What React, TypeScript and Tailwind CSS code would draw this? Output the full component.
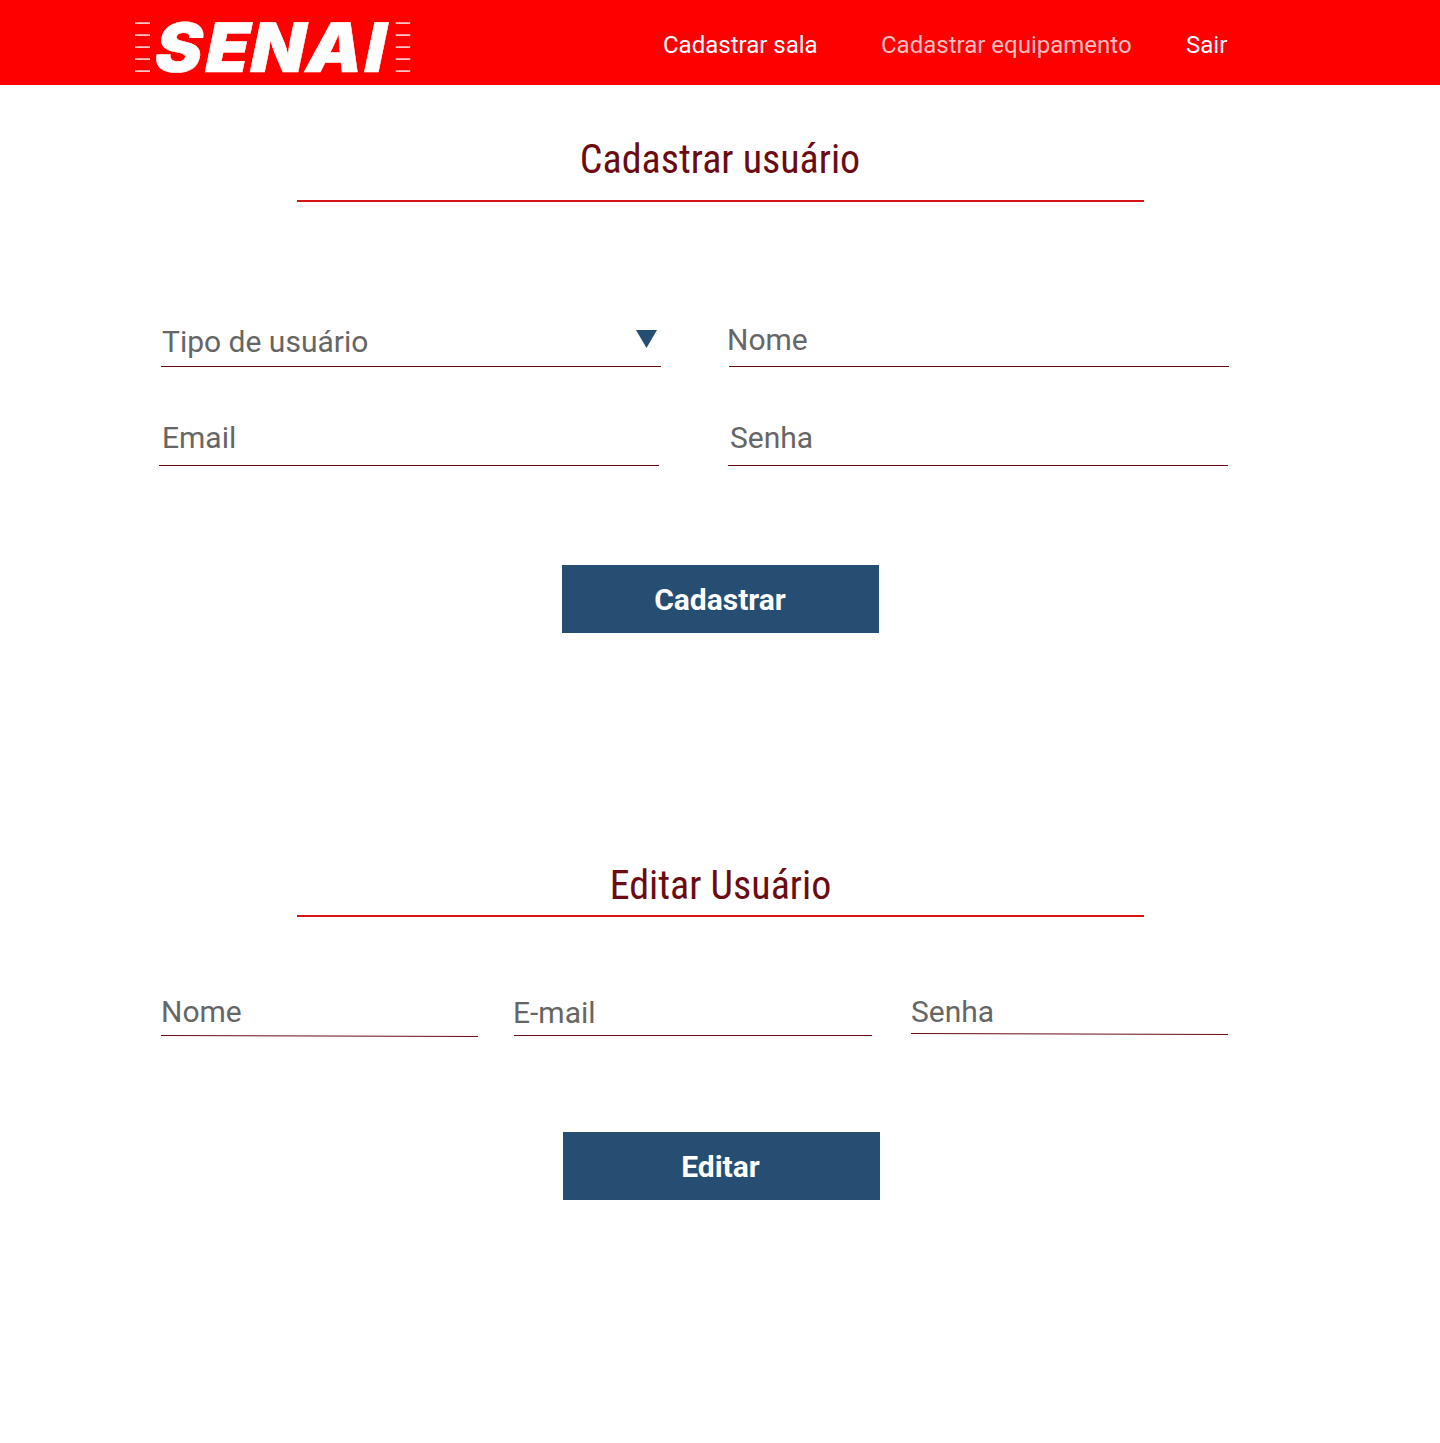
import type { ReactNode } from "react";

const TICKS = [22.3, 34.3, 46.3, 58.3, 70.3];

function Logo() {
  return (
    <svg width="286" height="85" viewBox="129 0 286 85" className="ml-[129px] shrink-0 overflow-visible" role="img" aria-label="SENAI">
      {TICKS.map((y) => (
        <g key={y} fill="#fff" fillOpacity="0.85">
          <rect x="135" y={y} width="15" height="1.6" />
          <rect x="395.7" y={y} width="14.5" height="1.6" />
        </g>
      ))}
      <text
        x="148.5 197.2 240.4 294 350.2"
        y="0"
        transform="translate(0 71.7) skewX(-2) scale(1.04 1)"
        fill="#fff"
        stroke="#fff"
        strokeWidth="0.5"
        className="font-['Inter',sans-serif] text-[68.3px] font-black italic"
      >
        SENAI
      </text>
    </svg>
  );
}

function Title({ children, className }: { children: ReactNode; className: string }) {
  return (
    <h2
      className={`ml-[297px] w-[847px] border-b-2 border-[#d61414] text-center font-['Roboto_Condensed','Roboto',sans-serif] text-[40px] leading-[48px] text-[#6b0c12] [font-stretch:75%] ${className}`}
    >
      {children}
    </h2>
  );
}

function Field({ label, className, children }: { label: string; className: string; children?: ReactNode }) {
  return (
    <div className={`flex shrink-0 items-start justify-between border-[#6b0c12] leading-9 ${className}`}>
      <span>{label}</span>
      {children}
    </div>
  );
}

function SlopedField({ label, className, gap }: { label: string; className: string; gap: string }) {
  return (
    <div className={`w-[317px] shrink-0 leading-9 ${className}`}>
      <div className={gap}>{label}</div>
      <svg width="317" height="3" className="block">
        <line x1="0" y1="0.5" x2="317" y2="1.5" stroke="#6b0c12" />
      </svg>
    </div>
  );
}

export default function App() {
  return (
    <div className="h-[1443px] w-[1440px] bg-white font-['Roboto',sans-serif]">
      <header className="flex h-[85px] items-start bg-[#ff0000] text-2xl text-white">
        <Logo />
        <nav className="mt-[29px] ml-[248px] flex whitespace-nowrap">
          <a className="w-[218px]">Cadastrar sala</a>
          <a className="w-[305px] text-white/75">Cadastrar equipamento</a>
          <a>Sair</a>
        </nav>
      </header>

      <section>
        <Title className="mt-[51px] h-[66px] pr-px">Cadastrar usuário</Title>
        <form className="mt-[120px] text-[30px] text-[#666666]">
          <div className="flex h-[97px] items-start">
            <Field label="Tipo de usuário" className="ml-[161px] h-[45px] w-[500px] border-b pt-[2px] pl-px">
              <svg width="21" height="18" className="mt-[6px] mr-1">
                <path d="M0 0H21L10.5 18Z" fill="#264e72" />
              </svg>
            </Field>
            <Field label="Nome" className="ml-[68px] h-[45px] w-[500px] border-b [&>span]:-ml-[2px]" />
          </div>
          <div className="flex h-[146px] items-start">
            <Field label="Email" className="ml-[159px] h-[47px] w-[500px] border-b pt-px pl-[3px]" />
            <Field label="Senha" className="ml-[69px] h-[47px] w-[500px] border-b pt-px pl-[2px]" />
          </div>
          <button type="button" className="ml-[562px] block h-[68px] w-[317px] bg-[#264e72] pr-px font-bold text-white">
            Cadastrar
          </button>
        </form>
      </section>

      <section>
        <Title className="mt-[229px] h-[55px]">Editar Usuário</Title>
        <form className="mt-[77px] text-[30px] text-[#666666]">
          <div className="flex h-[138px] items-start">
            <SlopedField label="Nome" className="ml-[161px]" gap="h-[41px]" />
            <Field label="E-mail" className="ml-[36px] h-[42px] w-[358px] border-b pt-px [&>span]:-ml-px" />
            <SlopedField label="Senha" className="ml-[39px]" gap="h-[39px]" />
          </div>
          <button type="button" className="ml-[563px] block h-[68px] w-[317px] bg-[#264e72] pr-[2px] font-bold text-white">
            Editar
          </button>
        </form>
      </section>
    </div>
  );
}
